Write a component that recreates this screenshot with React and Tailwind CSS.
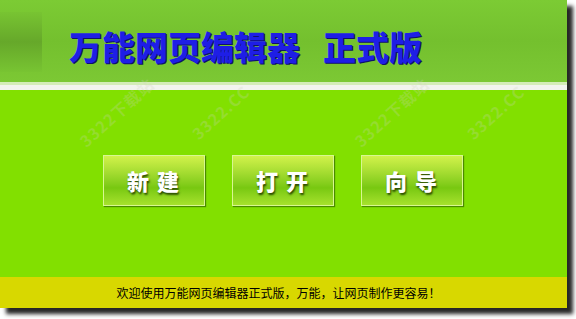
import React from "react";

const cjk = { fontFamily: '"Noto Sans CJK SC", "Noto Sans", sans-serif' };

function Watermark({ className, text }) {
    return (
        <div
            className={`pointer-events-none absolute -rotate-[42deg] whitespace-nowrap text-[16px] font-bold tracking-[1px] text-[#d0d0c0]/25 ${className}`}
            style={cjk}
        >
            {text}
        </div>
    );
}

function GreenButton({ label }) {
    return (
        <button
            className="flex h-[51px] w-[102px] items-center justify-center border border-[#d8f890] bg-gradient-to-b from-[#d2f24a] via-[#78c810] via-65% to-[#a6e22c] pl-[6px] text-[22px] font-black tracking-[8px] text-white shadow-[1px_1px_1px_#4a8a00]"
            style={{ ...cjk, textShadow: "1px 2px 2px #2a4a00" }}
        >
            {label}
        </button>
    );
}

export default function App() {
    return (
        <div className="relative h-[319px] w-[576px] overflow-hidden bg-white">
            <div className="flex h-[308px] w-[567px] flex-col shadow-[6px_6px_4px_rgba(0,0,0,0.85)]">
                {/* Header */}
                <div className="relative flex h-[82px] items-center bg-gradient-to-b from-[#7ccb34] via-[#74c02e] to-[#7cc834]">
                    <div className="absolute left-0 top-[12px] h-[60px] w-[42px] bg-gradient-to-b from-[#78c432] via-[#66a82a] to-[#78c432]" />
                    <h1
                        className="relative pl-[69px] pt-[10px] text-[33px] font-black leading-none text-[#1e1ee6]"
                        style={{ ...cjk, textShadow: "1px 1px 0 #10106a" }}
                    >
                        万能网页编辑器<span className="inline-block w-[23px]" />正式版
                    </h1>
                </div>

                {/* Divider stripe */}
                <div className="h-[3px] bg-[#d4ecb8]" />
                <div className="h-[5px] bg-[#f2f4ee]" />

                {/* Main */}
                <div className="flex flex-1 gap-[27px] bg-[#82e000] pl-[103px] pt-[65px]">
                    <GreenButton label="新建" />
                    <GreenButton label="打开" />
                    <GreenButton label="向导" />
                </div>

                {/* Footer */}
                <div className="flex h-[31px] items-center justify-center bg-[#d8d800] pr-[10px]">
                    <p className="text-[12px] leading-none text-black" style={cjk}>
                        欢迎使用万能网页编辑器正式版，万能，让网页制作更容易！
                    </p>
                </div>
            </div>

            {/* Watermarks */}
            <Watermark className="left-[70px] top-[100px]" text="3322下载站" />
            <Watermark className="left-[185px] top-[100px]" text="3322.CC" />
            <Watermark className="left-[345px] top-[100px]" text="3322下载站" />
            <Watermark className="left-[460px] top-[100px]" text="3322.CC" />
        </div>
    );
}
